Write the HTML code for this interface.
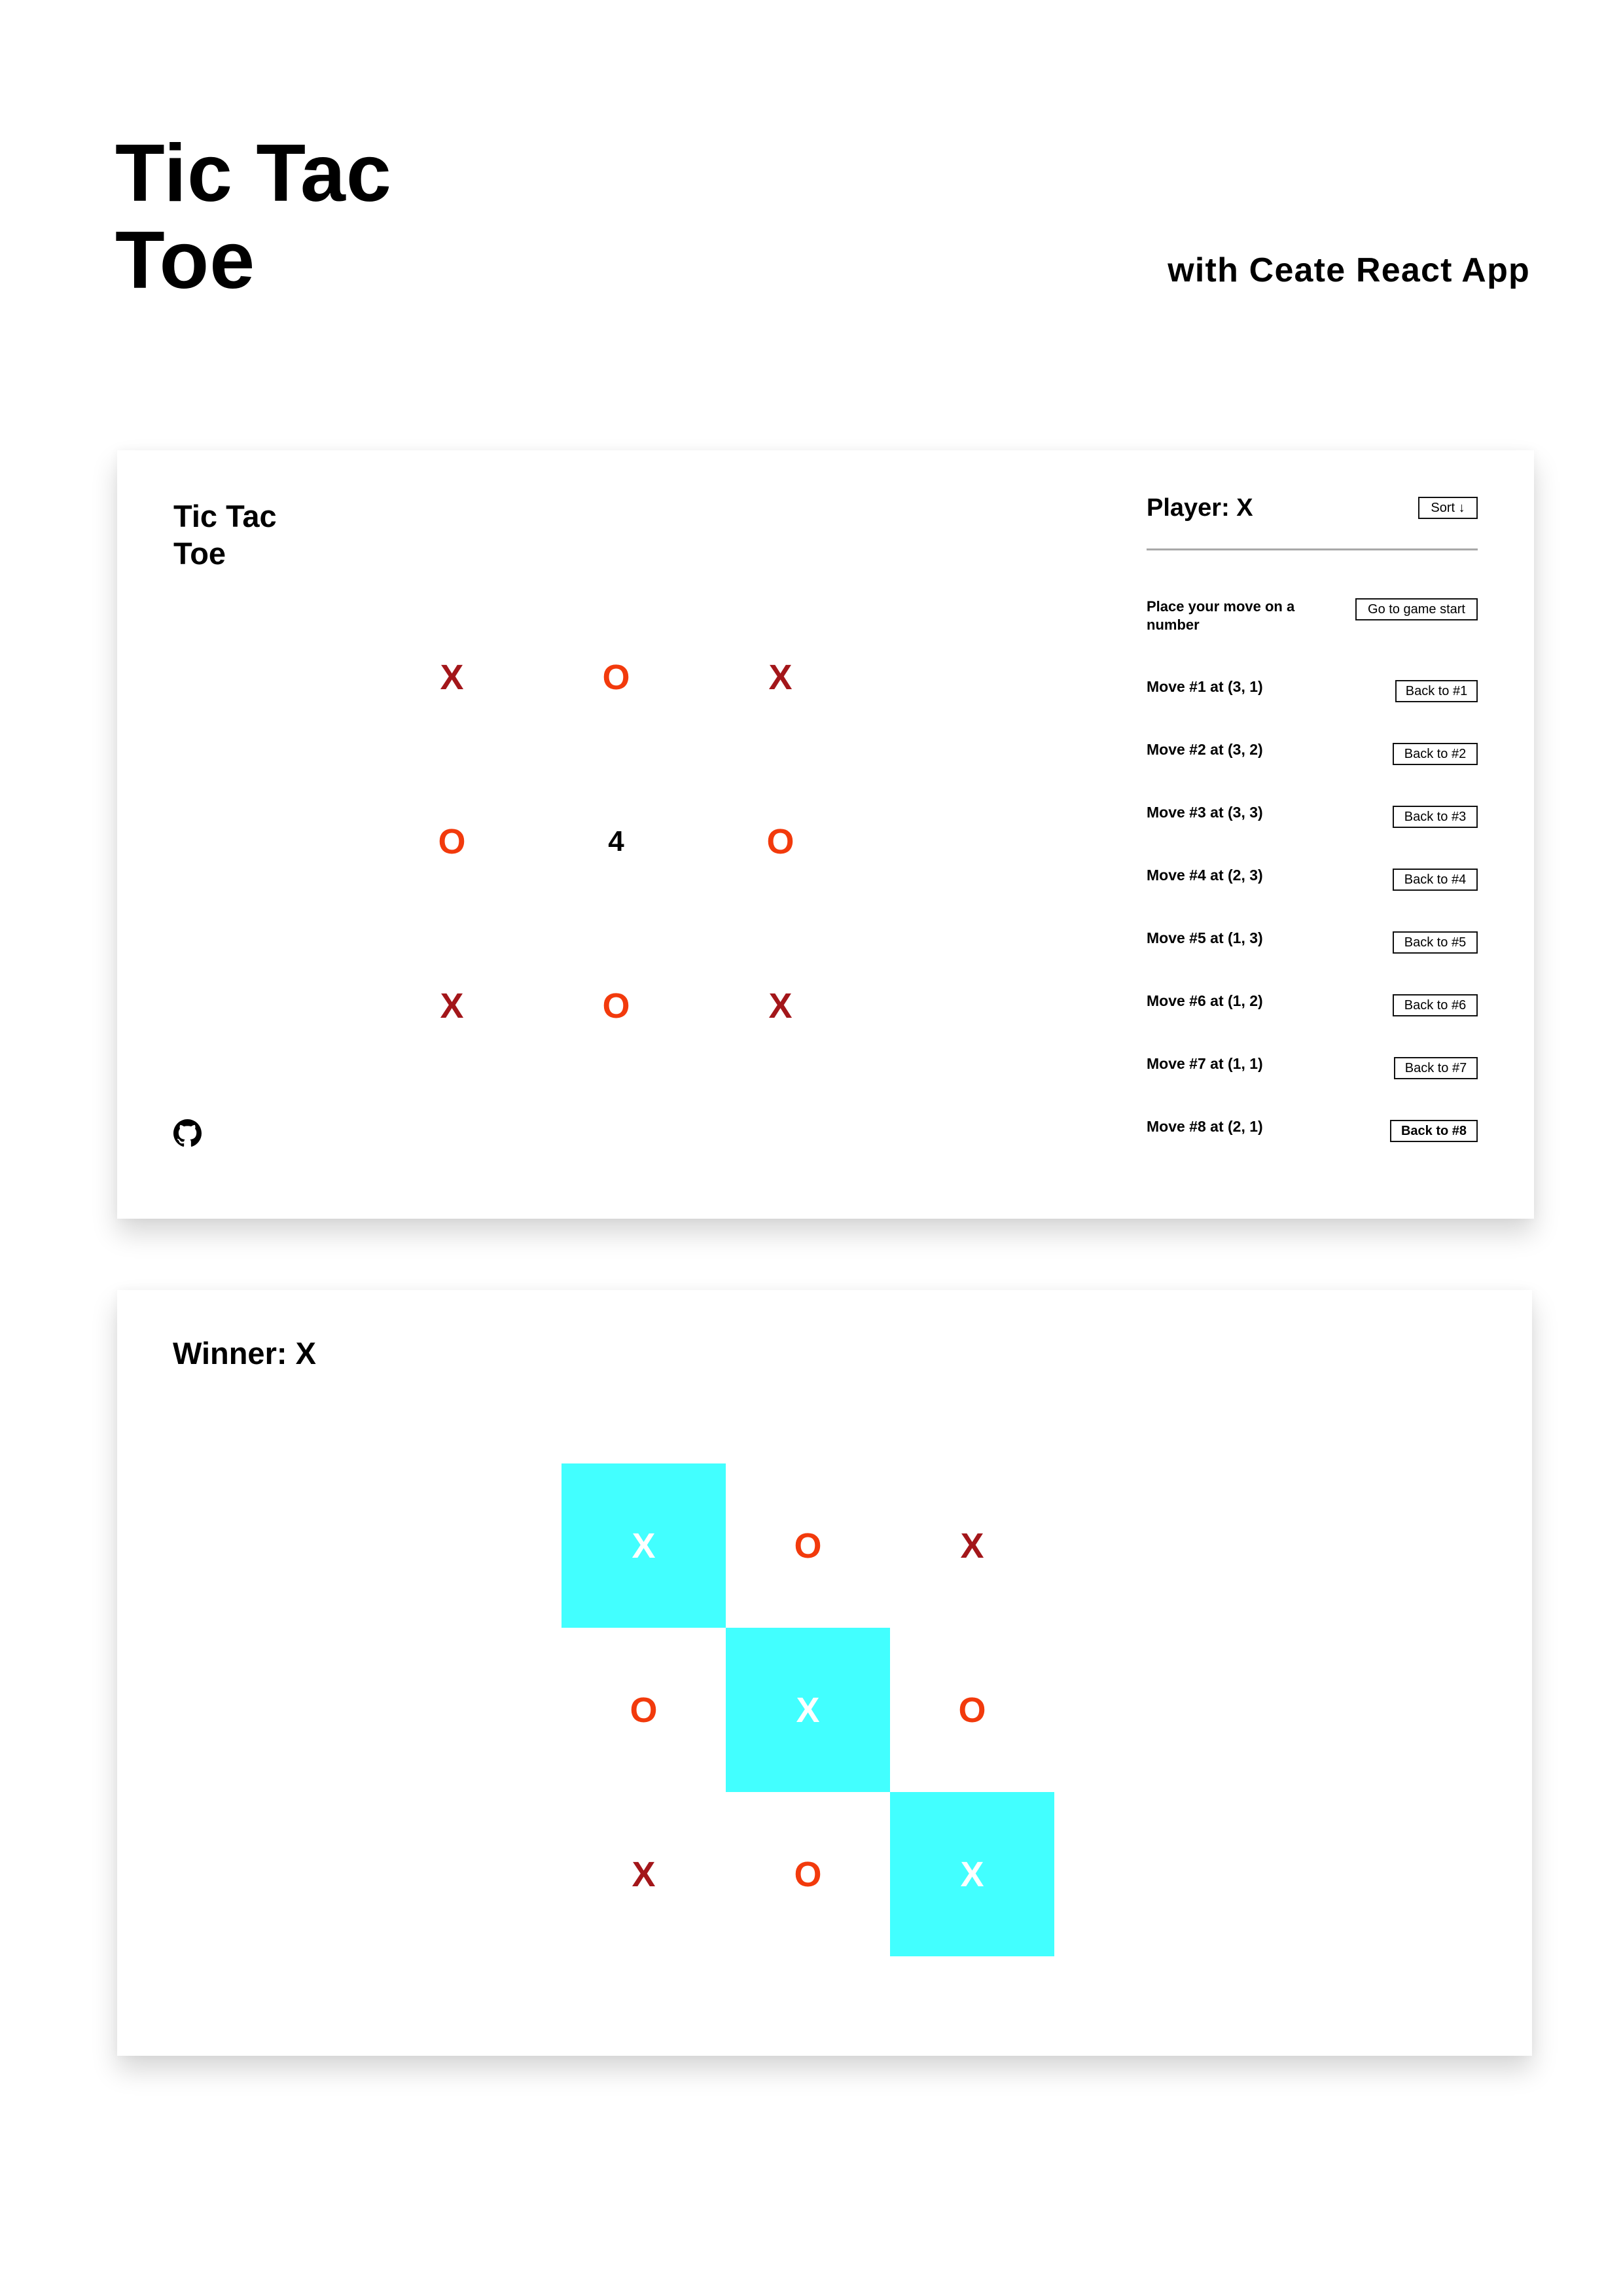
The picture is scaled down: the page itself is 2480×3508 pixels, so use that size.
<!DOCTYPE html>
<html><head><meta charset="utf-8">
<style>
*{margin:0;padding:0;box-sizing:border-box}
html,body{width:2480px;height:3508px;background:#fff;overflow:hidden}
body{position:relative;font-family:"Liberation Sans",sans-serif;color:#000}
.a{position:absolute;line-height:1;white-space:nowrap}
.b{font-weight:bold}
.card{position:absolute;background:#fff;box-shadow:0 22px 38px rgba(0,0,0,0.16),0 0 14px rgba(0,0,0,0.04)}
.btn{position:absolute;border:2px solid #111;background:#fff;font-size:20px;line-height:1;display:flex;align-items:center;justify-content:center;height:34px;white-space:nowrap}
.cell{position:absolute;width:251px;height:251px;display:flex;align-items:center;justify-content:center;font-weight:bold;font-size:54px;line-height:1}
.x{color:#a3161a}.o{color:#f23a0c}
.cy{background:#42ffff;color:#fff}
</style></head><body>

<div class="a b" style="left:176px;top:199px;font-size:124px;line-height:133px;white-space:normal;width:500px;letter-spacing:1px">Tic Tac<br>Toe</div>
<div class="a b" style="right:142px;top:387px;font-size:52px;letter-spacing:1.2px">with Ceate React App</div>

<div class="card" style="left:179px;top:688px;width:2165px;height:1174px"></div>
<div class="a b" style="left:265px;top:760px;font-size:47px;line-height:57px">Tic Tac<br>Toe</div>

<div class="cell x" style="left:565px;top:909px">X</div>
<div class="cell o" style="left:816px;top:909px">O</div>
<div class="cell x" style="left:1067px;top:909px">X</div>
<div class="cell o" style="left:565px;top:1160px">O</div>
<div class="cell" style="left:816px;top:1160px;font-size:44px">4</div>
<div class="cell o" style="left:1067px;top:1160px">O</div>
<div class="cell x" style="left:565px;top:1411px">X</div>
<div class="cell o" style="left:816px;top:1411px">O</div>
<div class="cell x" style="left:1067px;top:1411px">X</div>

<svg style="position:absolute;left:265px;top:1710px" width="43" height="43" viewBox="0 0 16 16"><path fill="#000" d="M8 0C3.58 0 0 3.58 0 8c0 3.54 2.290 6.530 5.470 7.590.4.07.55-.17.55-.38 0-.19-.01-.82-.01-1.49-2.010.37-2.530-.49-2.690-.94-.09-.23-.48-.94-.82-1.130-.28-.15-.68-.52-.01-.53.63-.01 1.080.58 1.230.82.72 1.210 1.870.87 2.330.66.07-.52.28-.87.51-1.070-1.780-.2-3.640-.89-3.640-3.950 0-.87.31-1.590.82-2.150-.08-.2-.36-1.020.08-2.120 0 0 .67-.21 2.200.82.64-.18 1.320-.27 2-.27.68 0 1.360.09 2 .27 1.530-1.040 2.200-.82 2.200-.82.44 1.100.16 1.920.08 2.120.51.56.82 1.270.82 2.150 0 3.070-1.870 3.750-3.650 3.950.29.25.54.73.54 1.480 0 1.070-.01 1.930-.01 2.200 0 .21.15.46.55.38A8.013 8.013 0 0016 8c0-4.420-3.580-8-8-8z"/></svg>

<div class="a b" style="left:1752px;top:757px;font-size:38px">Player: X</div>
<div class="btn" style="left:2167px;top:759px;width:91px">Sort ↓</div>
<div style="position:absolute;left:1752px;top:838px;width:506px;height:3px;background:#a8a8a8"></div>
<div class="a b" style="left:1752px;top:913px;font-size:22px;line-height:28px">Place your move on a<br>number</div>
<div class="btn" style="left:2071px;top:914px;width:187px">Go to game start</div>

<div class="a b" style="left:1752px;top:1038px;font-size:23px">Move #1 at (3, 1)</div>
<div class="btn" style="left:2132px;top:1039px;width:126px">Back to #1</div>
<div class="a b" style="left:1752px;top:1134px;font-size:23px">Move #2 at (3, 2)</div>
<div class="btn" style="left:2128px;top:1135px;width:130px">Back to #2</div>
<div class="a b" style="left:1752px;top:1230px;font-size:23px">Move #3 at (3, 3)</div>
<div class="btn" style="left:2128px;top:1231px;width:130px">Back to #3</div>
<div class="a b" style="left:1752px;top:1326px;font-size:23px">Move #4 at (2, 3)</div>
<div class="btn" style="left:2128px;top:1327px;width:130px">Back to #4</div>
<div class="a b" style="left:1752px;top:1422px;font-size:23px">Move #5 at (1, 3)</div>
<div class="btn" style="left:2128px;top:1423px;width:130px">Back to #5</div>
<div class="a b" style="left:1752px;top:1518px;font-size:23px">Move #6 at (1, 2)</div>
<div class="btn" style="left:2128px;top:1519px;width:130px">Back to #6</div>
<div class="a b" style="left:1752px;top:1614px;font-size:23px">Move #7 at (1, 1)</div>
<div class="btn" style="left:2130px;top:1615px;width:128px">Back to #7</div>
<div class="a b" style="left:1752px;top:1710px;font-size:23px">Move #8 at (2, 1)</div>
<div class="btn b" style="left:2124px;top:1711px;width:134px">Back to #8</div>

<div class="card" style="left:179px;top:1971px;width:2162px;height:1170px"></div>
<div class="a b" style="left:264px;top:2044px;font-size:47px">Winner: X</div>

<div class="cell cy" style="left:858px;top:2236px">X</div>
<div class="cell o" style="left:1109px;top:2236px">O</div>
<div class="cell x" style="left:1360px;top:2236px">X</div>
<div class="cell o" style="left:858px;top:2487px">O</div>
<div class="cell cy" style="left:1109px;top:2487px">X</div>
<div class="cell o" style="left:1360px;top:2487px">O</div>
<div class="cell x" style="left:858px;top:2738px">X</div>
<div class="cell o" style="left:1109px;top:2738px">O</div>
<div class="cell cy" style="left:1360px;top:2738px">X</div>

</body></html>
